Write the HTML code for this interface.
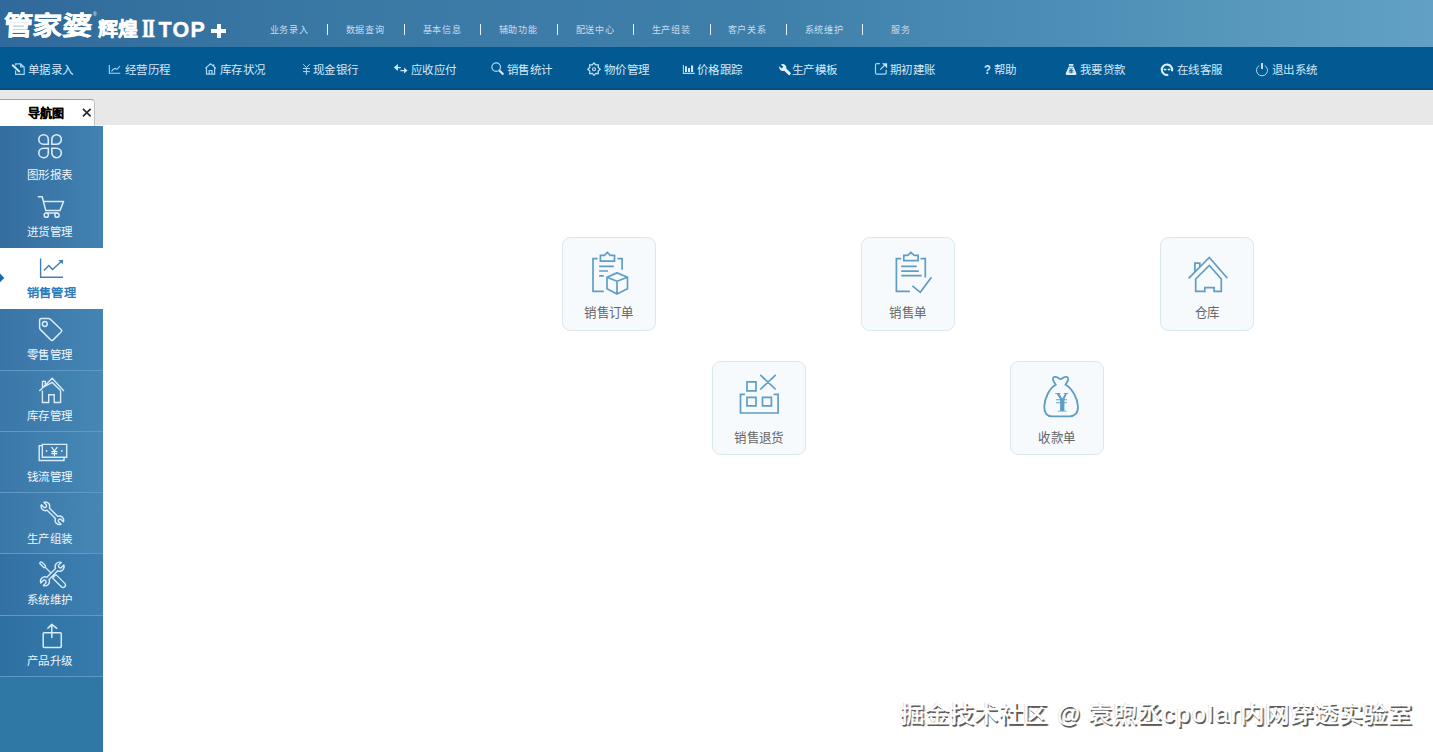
<!DOCTYPE html>
<html lang="zh-CN">
<head>
<meta charset="utf-8">
<title>管家婆辉煌II TOP+</title>
<style>
*{box-sizing:border-box;margin:0;padding:0}
html,body{width:1433px;height:752px;overflow:hidden;background:#fff;font-family:"Liberation Sans",sans-serif;}
body{position:relative}
#hdr{position:absolute;left:0;top:0;width:1433px;height:47px;background:linear-gradient(90deg,#30699b 0,#35719f 150px,#3b79a5 350px,#3e7faa 750px,#4587b0 910px,#4c8db7 1050px,#5798bc 1250px,#62a1c5 1433px);}
#tb{position:absolute;left:0;top:47px;width:1433px;height:43px;background:linear-gradient(180deg,#035a92 0,#035a92 40.6px,#044e80 41.4px,#044e80 100%)}
#tabbar{position:absolute;left:0;top:90px;width:1433px;height:35px;background:#e8e8e8}
#side{position:absolute;left:0;top:126px;width:103px;height:626px;background:#2f77a5}
#main{position:absolute;left:103px;top:126px;width:1330px;height:626px;background:#fff}

#logo{position:absolute;left:0;top:0;height:47px;width:240px;color:#fff}
#logo span{position:absolute;white-space:nowrap;line-height:1}
#lg1{left:4px;top:13px;font-size:30px;font-weight:900;-webkit-text-stroke:0.45px #fff;transform-origin:0 0;transform:scale(0.985,0.88) skewX(-3deg)}
#lgr{left:93px;top:12px;font-size:5px}
#lg2{left:98px;top:20px;font-size:20.5px;font-weight:900;-webkit-text-stroke:0.45px #fff;transform-origin:0 0;transform:scale(0.98,0.92)}
#lg3{left:142.3px;top:16.8px;font-size:24.5px;font-family:"Liberation Serif",serif;font-weight:bold;letter-spacing:-1.8px;-webkit-text-stroke:0.7px #fff;transform-origin:0 0;transform:scale(0.75,1)}
#lg4{left:158.6px;top:20px;font-size:21.5px;font-weight:bold;letter-spacing:1.2px;-webkit-text-stroke:0.35px #fff}
#lgp{position:absolute;left:211.3px;top:24px;width:15px;height:14px;font-size:0}
#lgp:before{content:"";position:absolute;left:5.5px;top:0;width:4px;height:14px;background:#fff}
#lgp:after{content:"";position:absolute;left:0;top:5px;width:15px;height:4px;background:#fff}
#tm{position:absolute;left:0;top:0;height:47px;width:1433px}
#tm a{position:absolute;top:24px;width:76px;margin-left:-38px;text-align:center;font-size:9.5px;line-height:11px;color:#c6dcee;text-decoration:none;white-space:nowrap;transform:scaleX(0.955)}
#tm i{position:absolute;top:24px;width:1px;height:11px;background:#e6f0f8}

#tab{position:absolute;left:-1px;top:9px;width:95.7px;height:27px;background:#fff;border:1px solid #c4c4c4;border-top-color:#a2a2a2;border-bottom:none;border-radius:0 4px 0 0}
#tab b{position:absolute;left:28px;top:7px;font-size:12px;line-height:14px;color:#000;-webkit-text-stroke:0.25px #000;font-family:"Liberation Serif",serif;font-weight:bold;white-space:nowrap}
#tab svg{position:absolute;left:82px;top:8.2px}
.card{position:absolute;width:94px;height:94px;background:#f6fafd;border:1px solid #d9e7ef;border-radius:8.5px}
.card span{position:absolute;left:0;top:67.8px;width:92px;text-align:center;font-size:13px;line-height:16px;color:#666;white-space:nowrap;transform:scale(0.958,0.98)}
#main>svg{position:absolute;left:0;top:0}
#wm{position:absolute;left:0;top:0}
#wm span{position:absolute;top:572.4px;font-size:25px;line-height:32px;color:#fff;-webkit-text-stroke:0.5px #fff;white-space:nowrap;transform-origin:0 50%;transform:scale(0.983,0.925);text-shadow:1.4px 1.4px 0 #5c5c5c,1.7px 1.7px 1px #909090,-0.8px -0.8px 0.6px #d4d4d4}
#tb span{position:absolute;top:16px;font-size:12px;line-height:14px;transform-origin:0 50%;transform:scale(0.958,0.98);color:#d3e8f8;white-space:nowrap}
#tb svg{position:absolute;left:0;top:0}
#tb .q{font-family:"Liberation Sans",sans-serif;font-weight:bold;font-size:13px;top:16px;color:#d3e8f8;transform:scale(0.86,1.03)}
#side svg{position:absolute;left:0;top:0}
#side span{position:absolute;left:26.7px;font-size:12px;line-height:14px;color:#eef6fc;white-space:nowrap;transform-origin:0 50%;transform:scale(0.958,0.98)}
#side span.sel{color:#2e7cb9;font-weight:bold;left:27px;transform:scale(1.02,0.98)}
#side i{position:absolute;left:0;width:103px;height:1px;background:#5e9ac5}
#sel{position:absolute;left:0;top:121.8px;width:103px;height:61.4px;background:#fff}
#side u{position:absolute;left:0;width:103px;display:block}
</style>
</head>
<body>
<div id="hdr">
<div id="logo"><span id="lg1">管家婆</span><span id="lgr">®</span><span id="lg2">辉煌</span><span id="lg3">II</span><span id="lg4">TOP</span><div id="lgp">+</div></div>
<div id="tm">
<a style="left:289px">业务录入</a><i style="left:327px"></i>
<a style="left:365px">数据查询</a><i style="left:404px"></i>
<a style="left:442px">基本信息</a><i style="left:480px"></i>
<a style="left:518px">辅助功能</a><i style="left:557px"></i>
<a style="left:595px">配送中心</a><i style="left:633px"></i>
<a style="left:671px">生产组装</a><i style="left:710px"></i>
<a style="left:747px">客户关系</a><i style="left:786px"></i>
<a style="left:824px">系统维护</a><i style="left:862px"></i>
<a style="left:901px">服务</a>
</div>
</div>
<div id="tb">
<svg width="1433" height="43" viewBox="0 47 1433 43" fill="none" stroke="#a9d8f7" stroke-width="1.1">
<path d="M15.6 63.9H20.6L24.2 67V74.4H15.6ZM20.6 63.9V67H24.2"/>
<path d="M12 64.6L20 72.2" stroke="#04588f" stroke-width="3.6"/><path d="M12.2 64.8L19.8 72" stroke="#d9edfb" stroke-width="1.9"/>
<path d="M109.3 65V73.3H120.2M111.5 71.4L113.2 69.2L115.4 68.4L117 69.4L120 66"/>
<path d="M205.3 68.4L210.6 63.7L216 68.4M206.5 67.6V74.2H214.6V67.6M209.2 74.2V70.5H212V74.2M213.7 64.2V66.3" stroke-width="1.2"/>
<path d="M303.1 64.2L306.4 67.6L309.8 64.2M306.4 67.6V74.8M303 68.5H309.9M303 71.6H309.9" stroke-width="1"/>
<path d="M393.8 67.6L397.9 64.1V67H400.8V68.2H397.9V71ZM407.5 70.6L404.1 67.6V70H400.4V71.2H404.1V73.6Z" fill="#cfe8fa" stroke="none"/>
<circle cx="496.2" cy="67.1" r="4.3" stroke-width="1.2"/><path d="M499.3 70.4L503.4 74.5" stroke="#d9edfb" stroke-width="2.1"/>
<path d="M594 62.6L595.9 64.7L598.7 64.6L598.6 67.4L600.7 69.3L598.6 71.2L598.7 74L595.9 73.9L594 76L592.1 73.9L589.3 74L589.4 71.2L587.3 69.3L589.4 67.4L589.3 64.6L592.1 64.7Z" stroke-width="1.35" stroke="#c4e3f9" transform="translate(594 69.2) scale(0.92) translate(-594 -69.3)"/><circle cx="594" cy="69.2" r="1.5" stroke="#c4e3f9"/>
<path d="M683.4 65V73.4H694.8" stroke-width="1.1"/><path d="M685 66.2H687V71.9H685ZM688 68H690V71.9H688ZM691 65.5H693.1V71.9H691Z" fill="#cfe8fa" stroke="none"/>
<path d="M780.8 64.6A3.7 3.7 0 0 1 786.3 68.6L790.3 72.4A1.5 1.5 0 0 1 788.1 74.6L784.2 70.7A3.7 3.7 0 0 1 779.2 66.3L781.7 68.4L783.4 66.7Z" fill="#e6f2fb" stroke="none"/>
<path d="M879.8 63.7H877A1.5 1.5 0 0 0 875.5 65.2V72.7A1.5 1.5 0 0 0 877 74.2H884.7A1.5 1.5 0 0 0 886.2 72.7V69.7M880.2 69.6L884.6 65.3" stroke-width="1.2"/><path d="M882 63.2H887.1V68.2Z" fill="#c4e3f9" stroke="none"/>
<path d="M1068.9 64H1073.4V65.8H1068.9ZM1068.8 66.4H1073.5L1076.4 73.2A1.3 1.3 0 0 1 1075.2 75H1067A1.3 1.3 0 0 1 1065.8 73.2Z" fill="#d9edfb" stroke="none"/><path d="M1069.6 67.8L1071.1 69.6L1072.6 67.8M1071.1 69.6V73.4M1069 70.4H1073.2M1068.8 72H1073.4" stroke="#0a5c92" stroke-width="0.9"/>
<path d="M1172 71.2A5.2 5.2 0 1 0 1168.3 74.8" stroke="#dceefb" stroke-width="2.1"/><path d="M1162.6 69.5H1171.5" stroke="#dceefb" stroke-width="1.2" opacity="0.35"/><circle cx="1165" cy="69.5" r="1.1" fill="#dceefb" stroke="none"/><circle cx="1169" cy="69.5" r="1.1" fill="#dceefb" stroke="none"/>
<path d="M1259.3 65.5A5.5 5.5 0 1 0 1264.7 65.5" stroke-width="1"/><path d="M1262 63.1V69.1" stroke="#c4e3f9" stroke-width="1.9"/>
</svg>
<span style="left:27.8px">单据录入</span>
<span style="left:125.3px">经营历程</span>
<span style="left:219.8px">库存状况</span>
<span style="left:312.8px">现金银行</span>
<span style="left:410.9px">应收应付</span>
<span style="left:507.1px">销售统计</span>
<span style="left:603.6px">物价管理</span>
<span style="left:697.1px">价格跟踪</span>
<span style="left:792.4px">生产模板</span>
<span style="left:889.9px">期初建账</span>
<span style="left:993.5px">帮助</span>
<span style="left:1079.9px">我要贷款</span>
<span style="left:1176.6px">在线客服</span>
<span style="left:1272.1px">退出系统</span>
<span class="q" style="left:983.6px">?</span>
</div>
<div id="tabbar"><div id="tab"><b>导航图</b><svg width="10" height="10" viewBox="0 0 10 10"><path d="M1 1L9 9M9 1L1 9" stroke="#2a2a2a" stroke-width="1.7" transform="scale(0.96 0.93)"/></svg></div></div>
<div id="side">
<u style="top:0px;height:122px;background:linear-gradient(90deg,#346d9f,#4182b1)"></u>
<u style="top:183px;height:61.2px;background:linear-gradient(90deg,#3a74a6,#4485b4)"></u>
<u style="top:244.2px;height:61.2px;background:linear-gradient(90deg,#3b77a8,#4587b5)"></u>
<u style="top:305.4px;height:61.2px;background:linear-gradient(90deg,#3b78a9,#4688b6)"></u>
<u style="top:366.6px;height:61.2px;background:linear-gradient(90deg,#3a77a8,#4587b5)"></u>
<u style="top:427.8px;height:61.2px;background:linear-gradient(90deg,#3270a3,#3d80b0)"></u>
<u style="top:489px;height:61.7px;background:linear-gradient(90deg,#2f70a3,#367bac)"></u>
<div id="sel"></div>
<i style="top:243.7px"></i>
<i style="top:304.8px"></i>
<i style="top:366.0px"></i>
<i style="top:427.3px"></i>
<i style="top:488.5px"></i>
<i style="top:549.7px"></i>
<svg width="103" height="626" viewBox="0 126 103 626" fill="none" stroke="#d8ecfb" stroke-width="1.5" stroke-linejoin="round" stroke-linecap="round">
<path d="M48.3 144.2H43.5A4.75 4.75 0 1 1 48.3 139.5ZM51.85 144.2H56.5A4.75 4.75 0 1 0 51.85 139.5ZM48.3 148.2H43.5A4.75 4.75 0 1 0 48.3 153ZM51.85 148.2H56.5A4.75 4.75 0 1 1 51.85 153Z" stroke-width="1.6" stroke-linejoin="miter"/>
<path d="M38.3 196.8H42.2L45.8 210.6H59.9L63.6 201.5H43.5M46.3 213H57"/><circle cx="46.3" cy="215.2" r="2.1"/><circle cx="57" cy="215.2" r="2.1"/>
<path d="M40.6 258.6V277.2H63M43.8 270.6L48.9 265.5L52.5 269.5L60.8 261.9" stroke="#3f7fb6" stroke-width="1.4" stroke-linecap="butt" stroke-linejoin="miter"/><path d="M58.4 260.3L63.1 259.8L62.8 264.2Z" fill="#3f7fb6" stroke="none"/>
<path d="M41.6 318.6H49L50.4 319.2L61.3 329.7A1.4 1.4 0 0 1 61.3 331.7L52.9 340.1A1.4 1.4 0 0 1 50.9 340.1L40.2 329.4L39.6 328V320.6A2 2 0 0 1 41.6 318.6Z"/><circle cx="44.8" cy="324" r="2.4"/>
<path d="M39.3 391L52.2 378.2L63.9 391M42.4 390.6V402.5H48.7V394.8H54.2V402.5H60.6V390.6M42.4 387.6L52.2 382.4L60.6 390.6M42.5 387V381.4H45.3V384.6" stroke-linecap="butt" stroke-linejoin="miter" stroke-width="1.4"/>
<path d="M42.3 444.4H66.7V457.3H42.3ZM42 445.6H39.2V460.5H64V457.6" stroke-linejoin="miter" stroke-width="1.4"/><path d="M51.7 447.4L54.4 451L57.1 447.4M54.4 451V455.8M51.8 451.6H57M51.8 453.6H57" stroke="#f4faff" stroke-width="1.1"/><path d="M45.8 450.3H47.3V451.8H45.8ZM61.1 450.3H62.6V451.8H61.1Z" fill="#f4faff" stroke="none"/>
<path d="M-6.84 -1.8L6.84 -1.8A5 5 0 0 1 16.08 -2L12.5 -2A2 2 0 0 0 12.5 2L16.08 2A5 5 0 0 1 6.84 1.8L-6.84 1.8A5 5 0 0 1 -16.08 2L-12.5 2A2 2 0 0 0 -12.5 -2L-16.08 -2A5 5 0 0 1 -6.84 -1.8Z" transform="translate(52.4 513.3) rotate(45) scale(0.86)" stroke-width="1.65"/>
<g transform="translate(52.85 574.9) rotate(45)" stroke-width="1.3"><path d="M-16.6 -1.3H-12A1 1 0 0 1 -11 -0.3V0.3A1 1 0 0 1 -12 1.3H-16.6A1.3 1.3 0 0 1 -16.6 -1.3ZM-11 0H2M2 -2.4H14.4A2.4 2.4 0 0 1 14.4 2.4H2ZM2 -1.2L0.3 0L2 1.2"/></g>
<path d="M-6.84 -1.8L6.84 -1.8A5 5 0 0 1 16.08 -2L12.5 -2A2 2 0 0 0 12.5 2L16.08 2A5 5 0 0 1 6.84 1.8L-6.84 1.8A5 5 0 0 1 -16.08 2L-12.5 2A2 2 0 0 0 -12.5 -2L-16.08 -2A5 5 0 0 1 -6.84 -1.8Z" transform="translate(52.3 574) rotate(-45) scale(0.9)" stroke-width="1.5" fill="#3c7bab"/>
<path d="M44.2 632.7H60.3A1 1 0 0 1 61.3 633.7V646.4A1 1 0 0 1 60.3 647.4H44.2A1 1 0 0 1 43.2 646.4V633.7A1 1 0 0 1 44.2 632.7ZM51.8 637.6V624.4M47.9 628.3L51.8 624.3L56.8 628.3" stroke-width="1.5"/>
<path d="M0 273.6L4.3 277.9L0 282.2Z" fill="#1b6aa8" stroke="none"/>
</svg>
<span style="top:41.6px">图形报表</span>
<span style="top:99.1px">进货管理</span>
<span class="sel" style="top:160.2px">销售管理</span>
<span style="top:222.0px">零售管理</span>
<span style="top:283.2px">库存管理</span>
<span style="top:344.4px">钱流管理</span>
<span style="top:405.6px">生产组装</span>
<span style="top:466.8px">系统维护</span>
<span style="top:528.0px">产品升级</span>
</div>
<div id="main">
<div class="card" style="left:459px;top:110.5px"><span>销售订单</span></div>
<div class="card" style="left:758px;top:110.5px"><span>销售单</span></div>
<div class="card" style="left:1057px;top:110.5px"><span>仓库</span></div>
<div class="card" style="left:609px;top:235px"><span>销售退货</span></div>
<div class="card" style="left:907px;top:235px"><span>收款单</span></div>
<svg width="1330" height="626" viewBox="103 126 1330 626" fill="none" stroke="#5f9dc5" stroke-width="1.7">
<path d="M597.6 258.6H593V291.3H603.8M617.4 258.6H622.1V269.7M600.4 255.3H604.5L607.3 252.4L610.2 255.3H614.5V261.1H600.4ZM599.1 266.3H613.8M599.1 271H608M599.1 275.8H603.8"/>
<path d="M617 272.9L627.5 277.3V288.7L617 294.1L607 288.7V277.3ZM607 277.3L617 281.2L627.5 277.3M617 281.2V294.1" stroke-linejoin="round"/>
<path d="M901.2 258.6H896.4V291.3H909.9M920.6 258.6H925.3V277.6M903.8 255.3H907.7L910.9 252.4L914.2 255.3H918.1V260.7H903.8ZM901.2 266.3H916.7M901.2 271.1H918.8M901.2 275.7H921.7M912.4 285.9L920.3 292.3L931.4 277.3"/>
<path d="M1188.6 278.3L1209.3 257.5L1227.4 278.3M1195.7 291.3V279L1209.3 265.4L1221.3 279V291.3H1214.1V287.7H1204.8V291.3ZM1194.9 271.8V263.2H1199.8V267"/>
<path d="M744.9 394.4H740.5V413H778.1V394.4H773.6M747 381.9H756V390.8H747ZM747 397.4H756V405.9H747ZM762.5 397.4H771.4V405.9H762.5ZM760.3 374.9L775.7 389.5M775.7 374.9L760.3 389.5"/>
<path d="M1055.8 384.7C1054.5 382.5 1052.6 380.2 1052.9 378.6C1053.3 376.8 1055.4 376.4 1057 377.3C1058.4 378.1 1059.6 379.2 1060.6 379.2C1061.6 379.2 1062.7 378.1 1064 377.3C1065.6 376.4 1067.8 376.8 1068.2 378.6C1068.6 380.2 1066.7 382.5 1065.5 384.7C1072 388.2 1077.6 398 1078 406.5C1078.3 413.2 1074.5 416.3 1069.8 416.3H1051.8C1047 416.3 1044 413.2 1044.3 406.5C1044.7 398 1049.3 388.2 1055.8 384.7Z" stroke-width="1.8"/>
<path d="M1060.1 399.2L1056.6 393.8H1055.1V393H1060.6V393.8H1059.3L1062.3 398.6L1065 393.8H1063.7V393H1068.4V393.8H1066.9L1064.4 399.2H1066.9V400.2H1064.4V402.3H1066.9V403.3H1064.4V410.7H1066.6V411.6H1057.6V410.7H1060.1V403.3H1056.1V402.3H1060.1V400.2H1056.1V399.2Z" fill="#5f9dc5" stroke="none"/>
</svg>
<div id="wm"><span style="left:797.2px">掘金技术社区</span><span style="left:953.6px;transform:scale(0.93,0.925)">@</span><span style="left:985.4px">袁煦丞</span><span style="left:1058.8px;letter-spacing:2px">cpolar</span><span style="left:1136.6px">内网穿透实验室</span></div>
</div>
</body>
</html>
